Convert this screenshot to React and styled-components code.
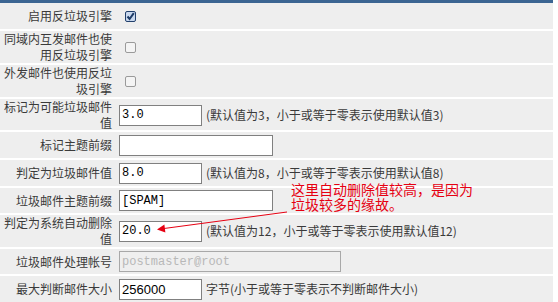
import React from 'react';
import styled, { createGlobalStyle } from 'styled-components';

const GlobalStyle = createGlobalStyle`
  body {
    margin: 0;
    background: #fff;
    font-family: "Noto Sans CJK SC", "Noto Sans", sans-serif;
    font-size: 12px;
    color: #333;
  }
`;

const Page = styled.div`
  position: relative;
  width: 553px;
`;

const TopBar = styled.div`
  height: 3px;
  background: #3b6592;
`;

const Table = styled.div`
  display: flex;
  flex-direction: column;
  gap: 2px;
`;

const Row = styled.div`
  display: grid;
  grid-template-columns: 117px 1fr;
  height: ${(p) => p.$h}px;
  background: #eeeeee;
`;

const Label = styled.div`
  align-self: center;
  text-align: right;
  padding-right: 5px;
  line-height: 16px;
  color: #3a3a3a;
`;

const Value = styled.div`
  display: flex;
  align-items: center;
  padding-left: 2px;
`;

const Box = styled.span`
  display: inline-flex;
  align-items: center;
  justify-content: center;
  box-sizing: border-box;
  width: 11px;
  height: 11px;
  margin-left: 6px;
  border: 1px solid ${(p) => (p.$checked ? '#22406c' : '#9a9a9a')};
  border-radius: 2px;
  background: ${(p) => (p.$checked ? '#c9d8ee' : '#f4f4f4')};
`;

const Field = styled.input`
  box-sizing: border-box;
  width: ${(p) => p.$w}px;
  height: 21px;
  margin: 0;
  padding: 0 2px;
  border: 1px solid ${(p) => (p.disabled ? '#a8a8a8' : '#808080')};
  background: ${(p) => (p.disabled ? '#efefef' : '#fff')};
  color: ${(p) => (p.disabled ? '#b8b8b8' : '#000')};
  font-family: ${(p) => (p.$sans ? '"Liberation Sans", Arial, sans-serif' : '"Liberation Mono", monospace')};
  font-size: ${(p) => (p.$sans ? 13 : 12)}px;
  outline: none;
`;

const Hint = styled.span`
  margin-left: 4px;
  font-size: 12px;
  line-height: 14px;
  color: #3a3a3a;
  white-space: nowrap;
`;

const Note = styled.div`
  position: absolute;
  left: 291px;
  top: 182px;
  color: #e60012;
  font-size: 14px;
  line-height: 15px;
  white-space: nowrap;
`;

const Arrow = styled.svg`
  position: absolute;
  left: 0;
  top: 0;
  pointer-events: none;
`;

const Check = ({ checked }) => (
  <Box $checked={checked}>
    {checked && (
      <svg width="9" height="9" viewBox="0 0 9 9">
        <path d="M1.5 4.5 L3.6 7 L7.8 1.2" fill="none" stroke="#1d3b66" strokeWidth="2" />
      </svg>
    )}
  </Box>
);

export default function App() {
  return (
    <Page>
      <GlobalStyle />
      <TopBar />
      <Table>
        <Row $h={26}>
          <Label>启用反垃圾引擎</Label>
          <Value><Check checked /></Value>
        </Row>
        <Row $h={32}>
          <Label>同域内互发邮件也使用反垃圾引擎</Label>
          <Value><Check /></Value>
        </Row>
        <Row $h={32}>
          <Label>外发邮件也使用反垃圾引擎</Label>
          <Value><Check /></Value>
        </Row>
        <Row $h={31}>
          <Label>标记为可能垃圾邮件值</Label>
          <Value>
            <Field $w={83} defaultValue="3.0" />
            <Hint>(默认值为3，小于或等于零表示使用默认值3)</Hint>
          </Value>
        </Row>
        <Row $h={26}>
          <Label>标记主题前缀</Label>
          <Value><Field $w={154} defaultValue="" /></Value>
        </Row>
        <Row $h={26}>
          <Label>判定为垃圾邮件值</Label>
          <Value>
            <Field $w={83} defaultValue="8.0" />
            <Hint>(默认值为8，小于或等于零表示使用默认值8)</Hint>
          </Value>
        </Row>
        <Row $h={25}>
          <Label>垃圾邮件主题前缀</Label>
          <Value><Field $w={154} defaultValue="[SPAM]" /></Value>
        </Row>
        <Row $h={32}>
          <Label>判定为系统自动删除值</Label>
          <Value>
            <Field $w={83} defaultValue="20.0" />
            <Hint>(默认值为12，小于或等于零表示使用默认值12)</Hint>
          </Value>
        </Row>
        <Row $h={25}>
          <Label>垃圾邮件处理帐号</Label>
          <Value><Field $w={222} disabled defaultValue="postmaster@root" /></Value>
        </Row>
        <Row $h={26}>
          <Label>最大判断邮件大小</Label>
          <Value>
            <Field $w={83} $sans defaultValue="256000" />
            <Hint>字节(小于或等于零表示不判断邮件大小)</Hint>
          </Value>
        </Row>
      </Table>
      <Note>
        这里自动删除值较高，是因为
        <br />
        垃圾较多的缘故。
      </Note>
      <Arrow width="553" height="302" viewBox="0 0 553 302">
        <line x1="287" y1="212" x2="164" y2="228.5" stroke="#e60012" strokeWidth="1" />
        <polygon points="157,229.5 165.4,232.5 164.4,224.6" fill="#e60012" />
      </Arrow>
    </Page>
  );
}
